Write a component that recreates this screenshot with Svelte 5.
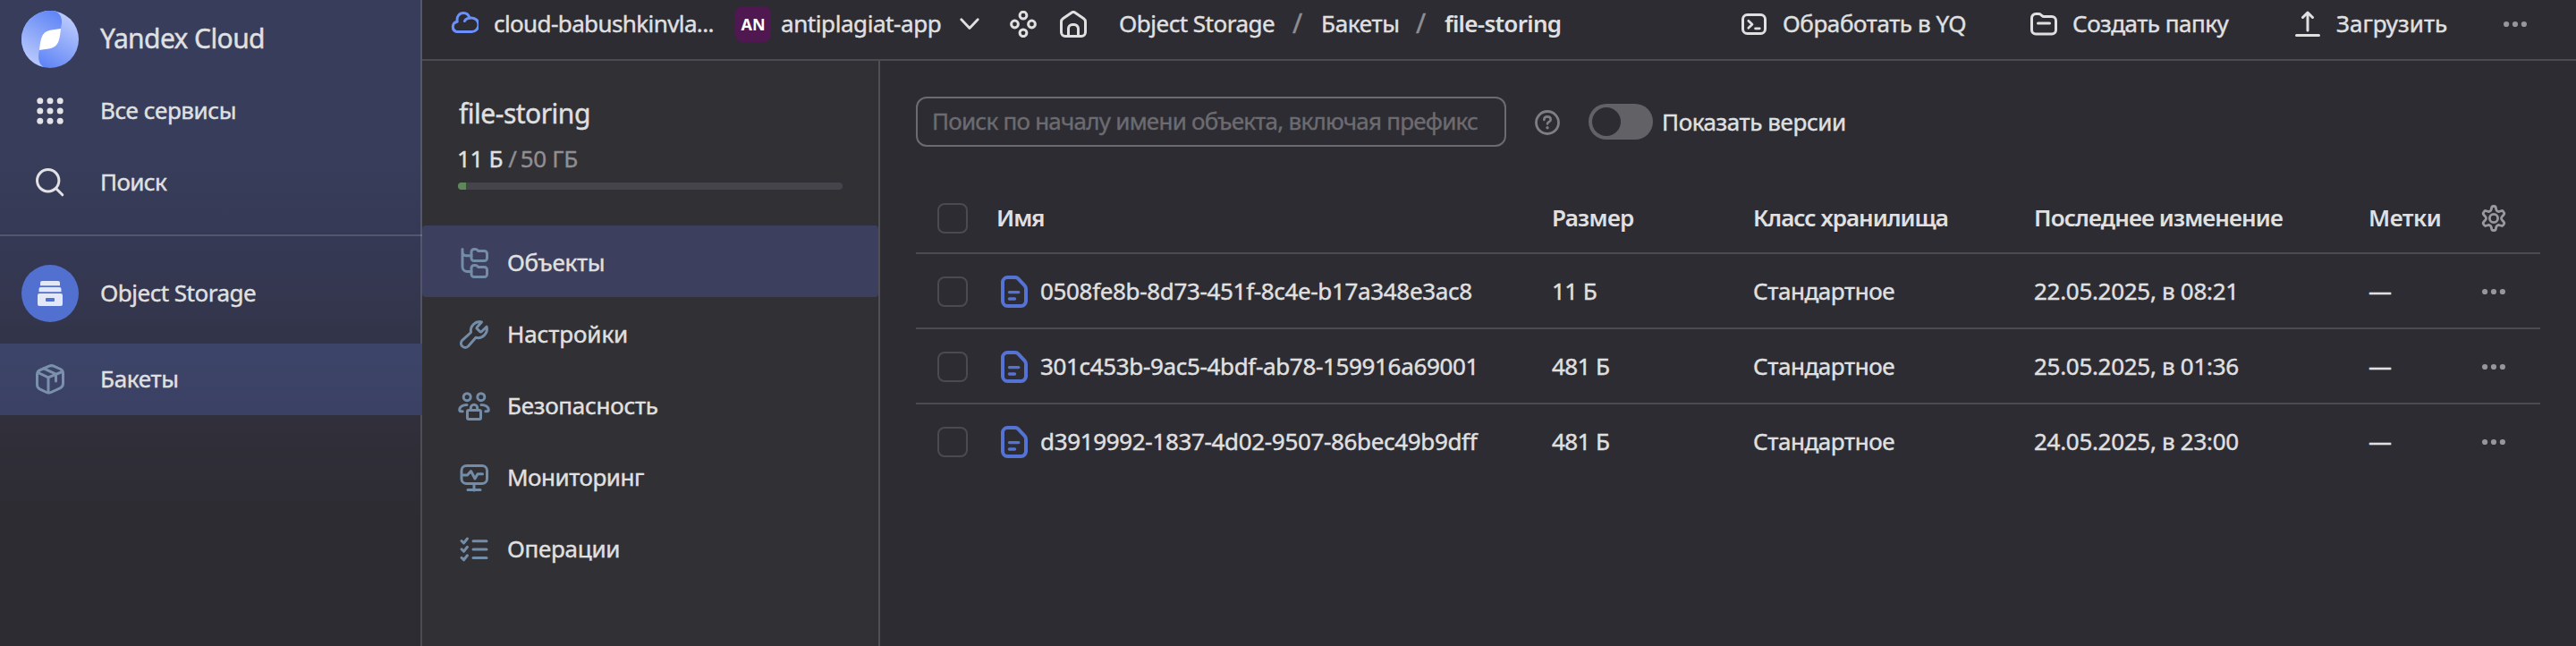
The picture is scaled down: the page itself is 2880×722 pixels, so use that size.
<script>
  const objects = [
    { name: '0508fe8b-8d73-451f-8c4e-b17a348e3ac8', size: '11 Б', date: '22.05.2025, в 08:21' },
    { name: '301c453b-9ac5-4bdf-ab78-159916a69001', size: '481 Б', date: '25.05.2025, в 01:36' },
    { name: 'd3919992-1837-4d02-9507-86bec49b9dff', size: '481 Б', date: '24.05.2025, в 23:00' }
  ];
  const sections = [
    { id: 'objects', label: 'Объекты', active: true },
    { id: 'settings', label: 'Настройки' },
    { id: 'security', label: 'Безопасность' },
    { id: 'monitoring', label: 'Мониторинг' },
    { id: 'operations', label: 'Операции' }
  ];
  const dots = [5, 16.2, 27.4];
</script>

{#snippet more()}
  <svg class="more" width="26" height="8" viewBox="0 0 26 8"><circle cx="3.1" cy="4" r="3.1" /><circle cx="13" cy="4" r="3.1" /><circle cx="22.9" cy="4" r="3.1" /></svg>
{/snippet}

<div class="app">
  <aside class="sidebar">
    <a class="side-row logo-row">
      <svg width="64" height="64" viewBox="0 0 64 64">
        <defs>
          <linearGradient id="lobeL" gradientUnits="userSpaceOnUse" x1="40" y1="4" x2="8" y2="56"><stop offset="0" stop-color="#6186f6" /><stop offset="1" stop-color="#b9c9fc" /></linearGradient>
          <linearGradient id="lobeR" gradientUnits="userSpaceOnUse" x1="24" y1="60" x2="56" y2="8"><stop offset="0" stop-color="#6186f6" /><stop offset="1" stop-color="#bccbfd" /></linearGradient>
        </defs>
        <circle cx="32" cy="32" r="32" fill="url(#lobeR)" />
        <path d="M38.7.7C43 3 45.6 8 45 14L44 20 20 44C18 52 19 60 25.3 63.3A32 32 0 1 1 38.7.7Z" fill="url(#lobeL)" />
        <path d="M44 20C42.500 35 40.500 40 32 42.200L20 44C21.500 29 23.500 24 32 21.800Z" fill="#fff" />
      </svg>
      <span class="brand">Yandex Cloud</span>
    </a>
    <a class="side-row">
      <svg width="64" height="32" viewBox="-16 0 64 32" fill="#e2e2e6">
        {#each dots as y}{#each dots as x}<circle cx={x - 0.2} cy={y - 0.2} r="3.5" />{/each}{/each}
      </svg>
      <span class="s4">Все сервисы</span>
    </a>
    <a class="side-row">
      <svg width="64" height="32" viewBox="-16 0 64 32" fill="none" stroke="#e2e2e6" stroke-width="3" stroke-linecap="round"><circle cx="13.700" cy="13.800" r="12.200" /><path d="M22.800 22.800l7 7" /></svg>
      <span class="s6">Поиск</span>
    </a>
    <div class="side-divider"></div>
    <a class="side-row service">
      <svg width="64" height="64" viewBox="0 0 64 64">
        <circle cx="32" cy="32" r="32" fill="#5270cf" />
        <path d="M23 18h18a2 2 0 0 1 2 2v3.300H21V20a2 2 0 0 1 2-2zM21.500 25h21a2 2 0 0 1 2 2v3.300h-25V27a2 2 0 0 1 2-2zM20 32h24a2 2 0 0 1 2 2v10a2 2 0 0 1-2 2H20a2 2 0 0 1-2-2V34a2 2 0 0 1 2-2z" fill="#e3e8f8" />
        <rect x="27" y="37" width="10" height="4" rx="1" fill="#5270cf" />
      </svg>
      <span class="s5">Object Storage</span>
    </a>
    <a class="side-row active">
      <svg width="64" height="36" viewBox="-16 0 64 36" fill="none" stroke="#7a90ab" stroke-width="3" stroke-linejoin="round" stroke-linecap="round">
        <path d="M5 7.500L15 3.200a6 6 0 0 1 5 0l7.500 3.300a5 5 0 0 1 3 4.500v11.500a6 6 0 0 1-3.500 5.400L17 32.500a6 6 0 0 1-5 0l-7.500-3.600a5.500 5.500 0 0 1-3-5V12.500A5.500 5.500 0 0 1 5 7.500z" /><path d="M2.500 10.500L14 15.800l15.500-6.300M14 16v16.500M9 5.800l13.500 6.300V20" />
      </svg>
      <span class="s3">Бакеты</span>
    </a>
  </aside>

  <div class="workspace">
    <header>
      <div class="cloud">
        <svg width="32" height="32" viewBox="0 0 32 32" fill="none" stroke="#6a91fb" stroke-width="3" stroke-linecap="round" stroke-linejoin="round"><path d="M21.800 9.700C20.800 6.500 18.500 4.500 15.200 4.500c-4.500 0-8 3.600-7 9.700A5.800 5.800 0 0 0 7.500 25.500h16.700a7.800 7.800 0 0 0 0-15.600c-3.700 0-6.700 1-7.700 3.600" /></svg>
        <span class="s6">cloud-babushkinvla...</span>
      </div>
      <div class="folder">
        <span class="badge">AN</span>
        <span class="s4">antiplagiat-app</span>
        <svg class="chev" width="22" height="14" viewBox="0 0 22 14" fill="none" stroke="#e0e0e0" stroke-width="2.800" stroke-linecap="round" stroke-linejoin="round"><path d="M1.800 1.800L11 11.500l9.200-9.700" /></svg>
      </div>
      <svg class="nodes" width="30" height="30" viewBox="0 0 30 30" fill="none" stroke="#e0e0e0" stroke-width="3"><circle cx="15" cy="5.200" r="3.900" /><circle cx="5.500" cy="15" r="3.900" /><circle cx="24.500" cy="15" r="3.900" /><circle cx="15" cy="24.800" r="3.900" /></svg>
      <svg class="home" width="30" height="30" viewBox="0 0 30 30" fill="none" stroke="#e0e0e0" stroke-width="3" stroke-linejoin="round"><path d="M1.500 12.500a4.500 4.500 0 0 1 1.900-3.700L13.300 2a3 3 0 0 1 3.400 0l9.900 6.800a4.500 4.500 0 0 1 1.900 3.700V24a4.500 4.500 0 0 1-4.500 4.500H6A4.500 4.500 0 0 1 1.500 24zM9.500 28.500V20a4.500 4.500 0 0 1 4.500-4.500h2a4.500 4.500 0 0 1 4.500 4.500v8.500" /></svg>
      <nav class="crumbs">
        <span class="c1 s5">Object Storage</span><span class="slash">/</span><span class="c2 s3">Бакеты</span><span class="slash">/</span><span class="c3">file-storing</span>
      </nav>
      <div class="actions">
        <div class="act a1">
          <svg width="28" height="24" viewBox="0 0 28 24" fill="none" stroke="#e0e0e0" stroke-width="3" stroke-linecap="round" stroke-linejoin="round"><rect x="1.500" y="1.500" width="25" height="21" rx="5" /><path d="M7.800 8.300l4.200 4-4.200 4M15.500 16.800h4.800" stroke-width="2.700" /></svg>
          <span class="s4">Обработать в YQ</span>
        </div>
        <div class="act a2">
          <svg width="30" height="26" viewBox="0 0 30 26" fill="none" stroke="#e0e0e0" stroke-width="3" stroke-linecap="round" stroke-linejoin="round"><path d="M1.500 6a4.500 4.500 0 0 1 4.500-4.500h3a4 4 0 0 1 2.700 1l1.300 1.200a3 3 0 0 0 2 .8h9A4.500 4.500 0 0 1 28.500 9v10.500A4.500 4.500 0 0 1 24 24H6a4.500 4.500 0 0 1-4.500-4.500zM8.500 12h13" /></svg>
          <span class="s5">Создать папку</span>
        </div>
        <div class="act a3">
          <svg width="28" height="30" viewBox="0 0 28 30" fill="none" stroke="#e0e0e0" stroke-width="3" stroke-linecap="round" stroke-linejoin="round"><path d="M14 22V3M8.500 7.500L14 2l5.500 5.500M1.500 27.500h25" /></svg>
          <span class="s0">Загрузить</span>
        </div>
        {@render more()}
      </div>
    </header>

    <div class="body">
      <section class="panel">
        <h2>file-storing</h2>
        <div class="quota"><span>11 Б</span><span class="muted sl">/</span><span class="muted">50 ГБ</span></div>
        <div class="bar"><div></div></div>
        <nav>
          {#each sections as s}
            <a class="section {s.id}" class:active={s.active}>
              <svg width="36" height="36" viewBox="0 0 36 36" fill="none" stroke="#738ca7" stroke-width="3" stroke-linecap="round" stroke-linejoin="round">
                {#if s.id === 'objects'}
                  <path d="M5 2.500V22a5.500 5.500 0 0 0 5.500 5.500H15M5 5.500a4 4 0 0 0 4 4.200h6" />
                  <path d="M15 5.500a3 3 0 0 1 3-3h1.600a3 3 0 0 1 2.200 1l.9 1h6.800a3 3 0 0 1 3 3v5a3 3 0 0 1-3 3H18a3 3 0 0 1-3-3z" />
                  <path d="M15 23.500a3 3 0 0 1 3-3h1.600a3 3 0 0 1 2.200 1l.9 1h6.800a3 3 0 0 1 3 3v5a3 3 0 0 1-3 3H18a3 3 0 0 1-3-3z" />
                {:else if s.id === 'settings'}
                  <path d="M26.500 3.900L21.500 9.500a1.500 1.500 0 0 0 0 2l3 3a1.500 1.500 0 0 0 2 0l5.600-5.300A10 10 0 0 1 20 21.300L11.500 31a4.700 4.700 0 0 1-6.700-6.700L14.500 15.500A10 10 0 0 1 26.500 3.900z" />
                {:else if s.id === 'security'}
                  <circle cx="10.200" cy="7.700" r="4" /><circle cx="25.800" cy="7.700" r="4" />
                  <rect x="10.500" y="22.500" width="15" height="10" rx="1.500" />
                  <path d="M14.300 22v-2a3.700 3.700 0 0 1 7.400 0v2M10 16.500c-4.700 0-8.300 2.500-8.300 5.300 0 1.200.8 2 2 2h1.500M26 16.500c4.700 0 8.300 2.500 8.300 5.300 0 1.200-.8 2-2 2h-1.500" />
                {:else if s.id === 'monitoring'}
                  <rect x="4" y="4.500" width="28.500" height="20" rx="5.500" /><path d="M18 25v7M11 31.500h14M5 15h5.500l4-4.500 4.500 8.500 3-5.300h5.500" />
                {:else}
                  <path d="M17 8.700h15M17 18h15M17 27.500h15M4 8.500l2.500 2.500 4-5M4 17.800l2.500 2.500 4-5M4 27.300l2.500 2.500 4-5" />
                {/if}
              </svg>
              <span>{s.label}</span>
            </a>
          {/each}
        </nav>
      </section>

      <main>
        <div class="toolbar">
          <div class="search"><span>Поиск по началу имени объекта, включая префикс</span></div>
          <svg class="help" width="28" height="28" viewBox="0 0 28 28" fill="none" stroke="#7f7e83" stroke-width="2.800" stroke-linecap="round"><circle cx="14" cy="14" r="12.500" /><path d="M10.300 11c0-2.200 1.600-3.600 3.700-3.600s3.700 1.300 3.700 3.300c0 2.500-3.700 2.500-3.700 4.800" stroke-width="2.600" /><circle cx="14" cy="19.800" r="1.700" fill="#7f7e83" stroke="none" /></svg>
          <div class="switch"><i></i></div>
          <span class="switch-label s4">Показать версии</span>
        </div>

        <div class="row head">
          <i class="check"></i>
          <span class="h-name">Имя</span>
          <span>Размер</span>
          <span class="h-class">Класс хранилища</span>
          <span class="h-date">Последнее изменение</span>
          <span class="h-tags">Метки</span>
          <svg class="gear" width="32" height="32" viewBox="0 0 32 32" fill="none" stroke="#9a999d" stroke-width="2.800" stroke-linejoin="round"><circle cx="16" cy="16" r="4.600" /><path d="M13.600 4.200a2 2 0 0 1 2-1.700h.8a2 2 0 0 1 2 1.700l.3 1.800a3 3 0 0 0 4 2.300l1.700-.6a2 2 0 0 1 2.400.9l.6 1a2 2 0 0 1-.4 2.600l-1.400 1.500a3 3 0 0 0 0 4.600l1.400 1.500a2 2 0 0 1 .4 2.600l-.6 1a2 2 0 0 1-2.400.9l-1.700-.6a3 3 0 0 0-4 2.300l-.3 1.800a2 2 0 0 1-2 1.700h-.8a2 2 0 0 1-2-1.700l-.3-1.800a3 3 0 0 0-4-2.300l-1.700.6a2 2 0 0 1-2.400-.9l-.6-1a2 2 0 0 1 .4-2.600l1.400-1.500a3 3 0 0 0 0-4.600L5 12.200a2 2 0 0 1-.4-2.600l.6-1a2 2 0 0 1 2.400-.9l1.700.6a3 3 0 0 0 4-2.300z" /></svg>
        </div>
        {#each objects as o}
          <div class="row">
            <i class="check"></i>
            <span class="name">
              <svg width="32" height="36" viewBox="0 0 32 36" fill="none" stroke="#5473d4" stroke-width="4" stroke-linejoin="round" stroke-linecap="round"><path d="M3 7.500A5.500 5.500 0 0 1 8.500 2h8.300a5 5 0 0 1 3.700 1.600l7 7.500a5.500 5.500 0 0 1 1.500 3.700v13.700a5.500 5.500 0 0 1-5.500 5.500h-15A5.500 5.500 0 0 1 3 28.500z" /><path d="M10.500 18.600h10.300M10.500 26h6" stroke-width="3.400" /></svg>
              <span class="object-id">{o.name}</span>
            </span>
            <span class="s6">{o.size}</span>
            <span class="s4">Стандартное</span>
            <span class="date">{o.date}</span>
            <span>—</span>
            {@render more()}
          </div>
        {/each}
      </main>
    </div>
  </div>
</div>

<style>
  :global(body) { background: #2d2c33; overflow: hidden; }
  .app { display: flex; width: 2880px; height: 722px; overflow: hidden; background: #2d2c33; color: #e0e0e1; font: 400 26px/36px 'Noto Sans', 'Open Sans', sans-serif; -webkit-text-stroke: 0.4px currentColor; }
  svg { display: block; flex: none; }
  span { white-space: pre; }
  .s0 { letter-spacing: 0; }
  .s3 { letter-spacing: -0.3px; }
  .s4 { letter-spacing: -0.42px; }
  .s5 { letter-spacing: -0.5px; }
  .s6 { letter-spacing: -0.6px; }

  .sidebar { box-sizing: border-box; width: 472px; flex: none; padding-top: 4px; border-right: 2px solid rgba(255, 255, 255, 0.15); background: linear-gradient(#373d5b 0, #373d5a 180px, #363955 262px, #32354a 370px, #302f3a 480px, #2d2c33 570px) border-box; }
  .side-row { display: flex; align-items: center; height: 80px; padding-left: 24px; gap: 24px; }
  .side-row span { padding-bottom: 3px; }
  .side-row .brand { font-size: 30px; letter-spacing: -0.6px; padding-bottom: 2px; }
  .side-divider { height: 2px; margin: 18px -2px 24px 0; background: rgba(255, 255, 255, 0.15); }
  .service { margin-bottom: 16px; }
  .side-row.active { margin-right: -2px; background: linear-gradient(#3c4569, #3a4064); }

  .workspace { flex: 1; min-width: 0; display: flex; flex-direction: column; }
  header { box-sizing: border-box; height: 68px; display: flex; align-items: center; padding: 0 55px 12px 32px; border-bottom: 2px solid #4c4b51; }
  header span { padding-bottom: 3px; }
  .cloud { display: flex; align-items: center; gap: 16px; width: 318px; }
  .cloud svg { margin: -2px 1px 0 -1px; }
  .folder { display: flex; align-items: center; width: 307px; }
  .folder .badge { width: 40px; height: 40px; padding: 0; margin-right: 11px; border-radius: 8px; background: #4f1850; color: #fff; font-size: 18px; font-weight: 700; line-height: 41px; text-align: center; -webkit-text-stroke: 0; }
  .folder .s4 { width: 200px; }
  .home { margin-left: 26px; }
  .crumbs { display: flex; margin-left: 36px; }
  .c1 { width: 194px; }
  .c2 { width: 106px; }
  .c3 { font-weight: 600; letter-spacing: -0.7px; -webkit-text-stroke: 0; }
  .slash { width: 32px; color: #8f8e92; font-size: 30px; }
  .actions { display: flex; align-items: center; margin-left: auto; }
  .act { display: flex; align-items: center; }
  .act svg { margin-right: 18px; }
  .a1 { width: 323px; }
  .a2 { width: 296px; }
  .a2 svg { margin-right: 17px; }
  .a3 { width: 233px; }
  .more { fill: #97969a; }

  .body { flex: 1; display: flex; min-height: 0; }
  .panel { box-sizing: border-box; width: 512px; flex: none; padding-top: 39px; border-right: 2px solid #504f54; background: #313035; }
  h2 { margin: 0 41px; font-size: 30px; line-height: 40px; font-weight: 400; letter-spacing: -0.5px; }
  .quota { display: flex; margin: 12px 39px 0; height: 36px; letter-spacing: -0.3px; }
  .quota .sl { margin: 0 4px 0 6px; }
  .muted { color: #8f8e92; }
  .bar { height: 8px; margin: 9px 40px 40px; width: 430px; border-radius: 4px; overflow: hidden; background: #45444a; }
  .bar div { width: 9px; height: 8px; background: #5f885a; }
  .section { display: flex; align-items: center; height: 80px; padding-left: 40px; gap: 19px; border-radius: 4px; }
  .section svg { margin-top: 4px; }
  .section span { padding-top: 1px; letter-spacing: -0.27px; }
  .section.active { background: #3c3f5d; }
  .section.settings span { letter-spacing: -0.1px; }
  .section.monitoring span { letter-spacing: -0.48px; }

  main { flex: 1; padding: 40px 40px 0; }
  .toolbar { display: flex; align-items: center; height: 56px; }
  .search { box-sizing: border-box; width: 660px; height: 56px; padding: 7px 16px; border: 2px solid #6c6b70; border-radius: 12px; color: #6c6b70; letter-spacing: -0.76px; }
  .help { margin: 2px 32px 0; }
  .switch { box-sizing: border-box; width: 72px; height: 40px; padding: 4px; border-radius: 20px; background: #626166; }
  .switch i { display: block; width: 32px; height: 32px; border-radius: 50%; background: #2d2c33; }
  .switch-label { margin-left: 10px; }
  .row { box-sizing: border-box; display: grid; grid-template-columns: 66px 621px 225px 314px 374px 103px auto; align-items: center; height: 84px; padding-left: 24px; border-bottom: 2px solid #4c4b51; }
  .row:last-child { border-color: transparent; }
  .head { height: 80px; margin-top: 40px; font-weight: 600; -webkit-text-stroke: 0; }
  .head span { padding-bottom: 1px; letter-spacing: -0.7px; }
  .head .h-name { letter-spacing: -1.1px; }
  .head .h-class { letter-spacing: -1px; }
  .head .h-date { letter-spacing: -0.88px; }
  .head .h-tags { letter-spacing: -0.5px; }
  .check { box-sizing: border-box; width: 34px; height: 34px; margin-top: 2px; border: 2px solid #4b4a50; border-radius: 8px; }
  .name { display: flex; align-items: center; gap: 13px; padding-left: 4px; }
  .name svg { margin-top: 2px; }
  .object-id { letter-spacing: -0.34px; }
  .date { letter-spacing: -0.3px; }
  .row .more { margin: 2px 0 0 24px; }
  .gear { margin: 2px 0 0 21px; }
</style>
